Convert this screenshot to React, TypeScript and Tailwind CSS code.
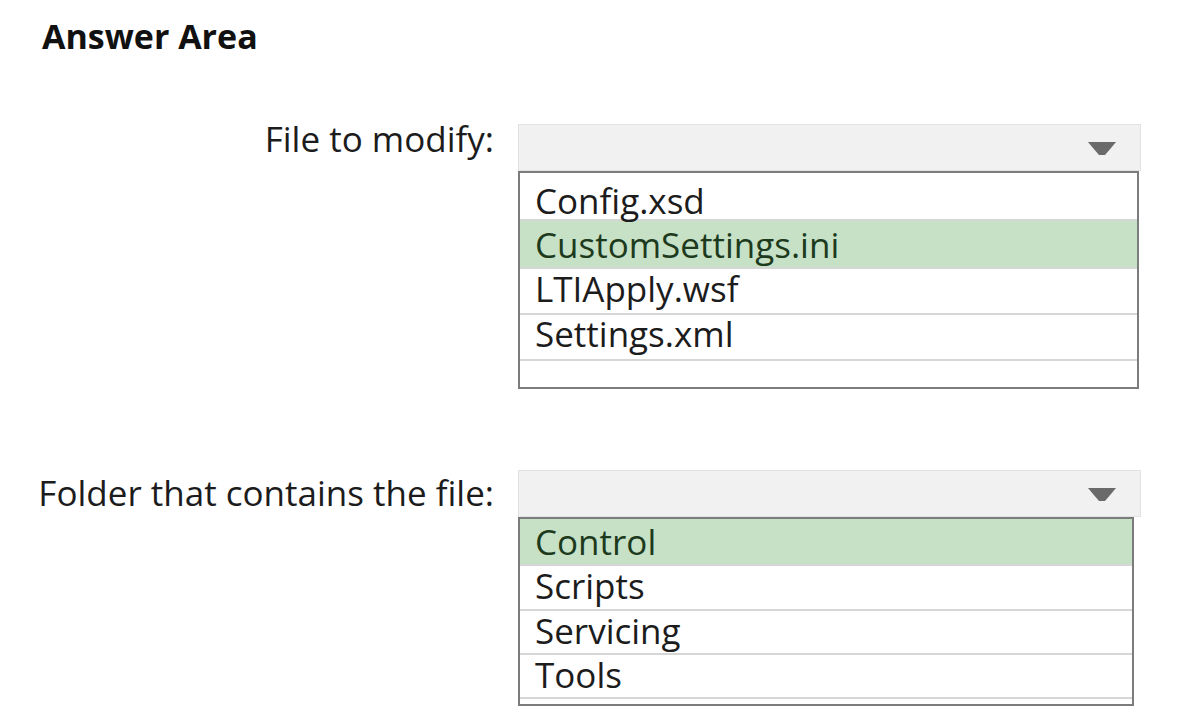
import { ReactNode } from "react";

interface Row {
    label: string;
    h: string;
    pt: string;
}

interface DropdownProps {
    rows: Row[];
    selected: string;
    listWidth: string;
    tail?: ReactNode;
}

// Filled caret at the right edge of the combo header
function Caret() {
    return (
        <svg width="30" height="16" viewBox="0 0 30 16" className="mr-[23px] mt-[3px]">
            <path d="M1 1 H29 L24 7 L18 14 H12 L6 7 Z" fill="#6a6a6a" />
        </svg>
    );
}

function Dropdown({ rows, selected, listWidth, tail }: DropdownProps) {
    return (
        <div className="flex flex-col w-[623px]">
            <div className="h-[47px] bg-[#f1f1f1] border border-[#e2e2e2] flex items-center justify-end">
                <Caret />
            </div>
            <div className={`${listWidth} border-2 border-[#7c7c7c] bg-white`}>
                {rows.map((row) => (
                    <div
                        key={row.label}
                        className={`${row.h} ${row.pt} pl-[15px] border-b-2 border-[#d6d6d6] ${row.label === selected ? "bg-[#c6e1c6] text-[#1d3a1d]" : "text-[#1c1c1c]"}`}
                    >
                        <div className="leading-[36px]">{row.label}</div>
                    </div>
                ))}
                {tail}
            </div>
        </div>
    );
}

export default function App() {
    return (
        <div className="min-h-screen bg-white text-[#1c1c1c] pt-[16px]" style={{ fontFamily: '"Open Sans", "Noto Sans", sans-serif' }}>
            <h1 className="pl-[42px] text-[34px] leading-[40px] font-bold text-[#111]">Answer Area</h1>

            {/* first question: which file */}
            <div className="flex items-start mt-[68px] text-[35px]">
                <div className="w-[494px] text-right leading-[36px] -mt-[3px]">File to modify:</div>
                <div className="ml-[24px]">
                    <Dropdown
                        rows={[
                            { label: "Config.xsd", h: "h-[48px]", pt: "pt-[10px]" },
                            { label: "CustomSettings.ini", h: "h-[48px]", pt: "pt-[6px]" },
                            { label: "LTIApply.wsf", h: "h-[46px]", pt: "pt-[2px]" },
                            { label: "Settings.xml", h: "h-[46px]", pt: "pt-[1px]" },
                        ]}
                        selected="CustomSettings.ini"
                        listWidth="w-[621px]"
                        tail={<div className="h-[26px]" />}
                    />
                </div>
            </div>

            {/* second question: which folder */}
            <div className="flex items-start mt-[81px] text-[35px]">
                <div className="w-[494px] text-right leading-[36px] mt-[5px]">Folder that contains the file:</div>
                <div className="ml-[24px]">
                    <Dropdown
                        rows={[
                            { label: "Control", h: "h-[47px]", pt: "pt-[5px]" },
                            { label: "Scripts", h: "h-[45px]", pt: "pt-[2px]" },
                            { label: "Servicing", h: "h-[44px]", pt: "pt-[2px]" },
                            { label: "Tools", h: "h-[44px]", pt: "pt-[2px]" },
                        ]}
                        selected="Control"
                        listWidth="w-[616px]"
                        tail={<div className="h-[5px]" />}
                    />
                </div>
            </div>
        </div>
    );
}
